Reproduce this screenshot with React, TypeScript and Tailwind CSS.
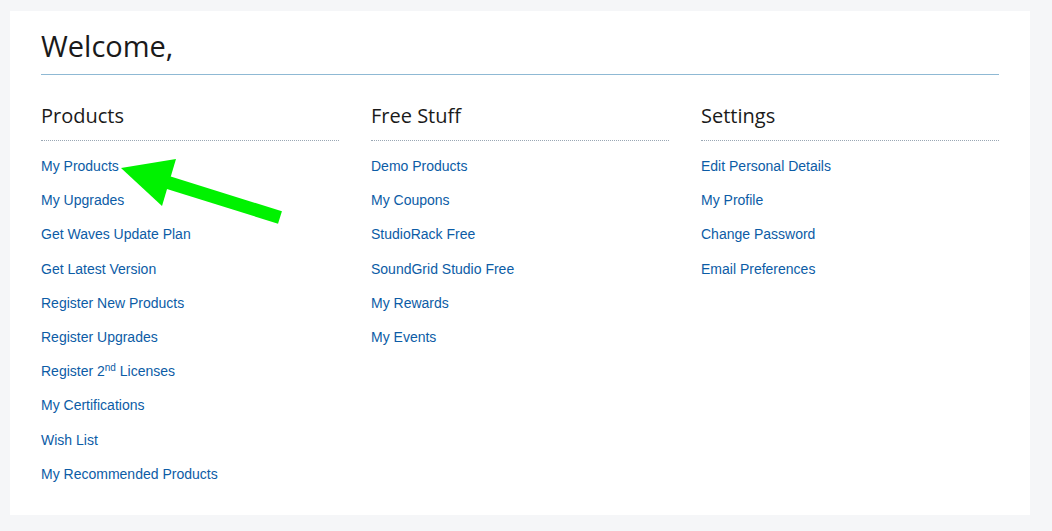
import React from "react";

const cols: { title: string; links: React.ReactNode[] }[] = [
  {
    title: "Products",
    links: [
      "My Products",
      "My Upgrades",
      "Get Waves Update Plan",
      "Get Latest Version",
      "Register New Products",
      "Register Upgrades",
      <>
        Register 2<sup className="text-[10px]">nd</sup> Licenses
      </>,
      "My Certifications",
      "Wish List",
      "My Recommended Products",
    ],
  },
  {
    title: "Free Stuff",
    links: [
      "Demo Products",
      "My Coupons",
      "StudioRack Free",
      "SoundGrid Studio Free",
      "My Rewards",
      "My Events",
    ],
  },
  {
    title: "Settings",
    links: ["Edit Personal Details", "My Profile", "Change Password", "Email Preferences"],
  },
];

export default function App() {
  return (
    <div className="relative w-[1052px] h-[531px] bg-[#f5f6f8] pt-[11px] pl-[10px] overflow-hidden">
      <div className="w-[1020px] h-[504px] bg-white px-[31px]">
        <h1
          className="w-[958px] text-[29px] leading-[40px] pt-[15px] pb-[8px] border-b border-[#8fb9d4] text-[#1a1a1a]"
          style={{ fontFamily: '"Open Sans", "Noto Sans", sans-serif' }}
        >
          Welcome,
        </h1>
        <div className="w-[958px] grid grid-cols-3 gap-x-[32px] mt-[27px]">
          {cols.map((c) => (
            <div key={c.title}>
              <h2
                className="text-[20px] leading-[28px] pb-[10px] border-b border-dotted border-[#9aa7b4] text-[#1a1a1a]"
                style={{ fontFamily: '"Open Sans", "Noto Sans", sans-serif' }}
              >
                {c.title}
              </h2>
              <ul className="mt-[8px]" style={{ fontFamily: '"Liberation Sans", Arial, sans-serif' }}>
                {c.links.map((l, i) => (
                  <li key={i} className="text-[14px] leading-[34.2px] text-[#0c5ca6]">
                    <a href="#" className="text-[#0c5ca6]">
                      {l}
                    </a>
                  </li>
                ))}
              </ul>
            </div>
          ))}
        </div>
      </div>
      <svg className="absolute left-0 top-0 pointer-events-none" width="1052" height="531">
        <line x1="160" y1="180" x2="280" y2="217.5" stroke="#00f200" strokeWidth="13" />
        <polygon points="121,168 176,159 162,206" fill="#00f200" />
      </svg>
    </div>
  );
}
